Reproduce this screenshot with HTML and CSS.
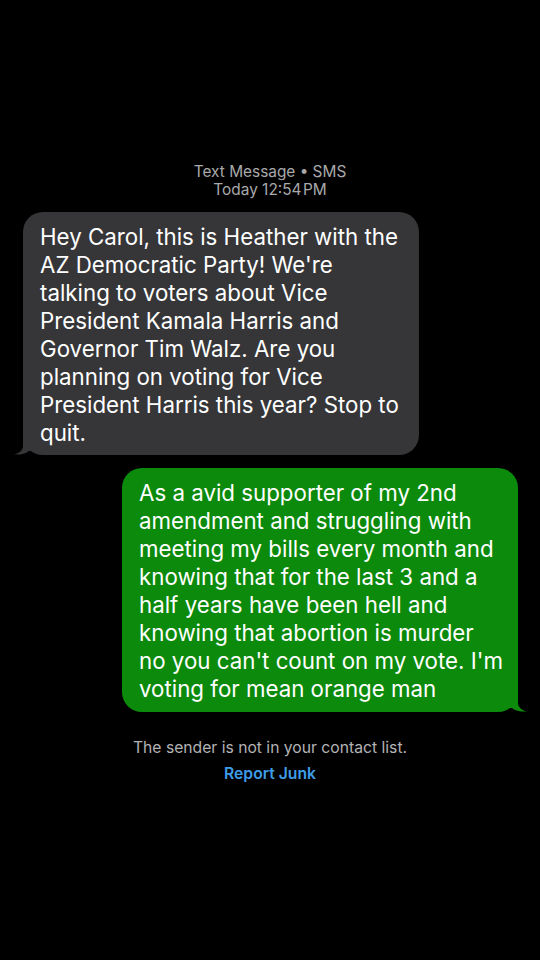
FILE: index.html
```html
<!DOCTYPE html>
<html>
<head>
<meta charset="utf-8">
<link rel="stylesheet" href="styles.css">
</head>
<body>
<div class="screen">
  <div class="meta">
    <div>Text Message • SMS</div>
    <div>Today 12:54&#8202;PM</div>
  </div>
  <div class="thread">
    <div class="bubble in">
      Hey Carol, this is Heather with the<br>AZ Democratic Party! We're<br>talking to voters about Vice<br>President Kamala Harris and<br>Governor Tim Walz. Are you<br>planning on voting for Vice<br>President Harris this year? Stop to<br>quit.
      <svg class="tail tail-in" width="20" height="24" viewBox="0 0 20 24"><path d="M9 2 V15 C9 19 5 22.5 0 23.5 C6 24 11 23 15 20 L20 20 L20 2 Z" fill="#363638"/></svg>
    </div>
    <div class="bubble out">
      As a avid supporter of my 2nd<br>amendment and struggling with<br>meeting my bills every month and<br>knowing that for the last 3 and a<br>half years have been hell and<br>knowing that abortion is murder<br>no you can't count on my vote. I'm<br>voting for mean orange man
      <svg class="tail tail-out" width="20" height="24" viewBox="0 0 20 24"><path d="M11 2 V15 C11 19 15 22.5 20 23.5 C14 24 9 23 5 20 L0 20 L0 2 Z" fill="#0c8a0c"/></svg>
    </div>
  </div>
  <div class="notice">
    <div class="notice-text">The sender is not in your contact list.</div>
    <div class="report">Report Junk</div>
  </div>
</div>
</body>
</html>
```
FILE: styles.css
```css
html, body {
  margin: 0;
  padding: 0;
  background: #000;
}
.screen {
  width: 540px;
  height: 960px;
  background: #000;
  font-family: Inter, "Liberation Sans", sans-serif;
  display: flex;
  flex-direction: column;
  padding-top: 163px;
  box-sizing: border-box;
}
.meta {
  text-align: center;
  color: #a9a9ab;
  font-size: 15.4px;
  line-height: 18px;
}
.thread {
  display: flex;
  flex-direction: column;
  gap: 13px;
  margin-top: 13px;
}
.bubble {
  position: relative;
  width: 396px;
  box-sizing: border-box;
  border-radius: 20px;
  padding: 11px 0 8px 17px;
  font-size: 22.3px;
  line-height: 28px;
  color: #fff;
  white-space: nowrap;
}
.bubble.in {
  background: #363638;
  margin-left: 23px;
}
.bubble.out {
  background: #0c8a0c;
  margin-left: 122px;
  padding-bottom: 9px;
}
.tail {
  position: absolute;
  bottom: 0;
}
.tail-in {
  left: -9px;
}
.tail-out {
  right: -9px;
}
.notice {
  margin-top: 23px;
  text-align: center;
  font-size: 15.7px;
  line-height: 26px;
}
.notice-text {
  color: #b3b3b5;
}
.report {
  color: #3f9de8;
  font-weight: 600;
}
```
